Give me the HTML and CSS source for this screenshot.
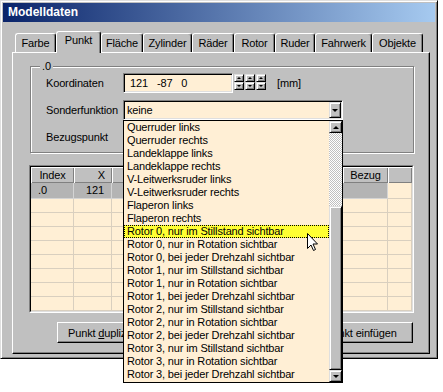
FILE: index.html
```html
<!DOCTYPE html>
<html lang="de">
<head>
  <title>Modelldaten</title>
  <meta charset="UTF-8" />
<link rel="stylesheet" href="styles.css">
</head>
<body>
<div class="window">
  <div class="titlebar">Modelldaten</div>
  <div class="client">
    <div class="tabs">
      <div class="tab">Farbe</div>
      <div class="tab active">Punkt</div>
      <div class="tab">Fläche</div>
      <div class="tab">Zylinder</div>
      <div class="tab">Räder</div>
      <div class="tab">Rotor</div>
      <div class="tab">Ruder</div>
      <div class="tab">Fahrwerk</div>
      <div class="tab">Objekte</div>
    </div>
    <div class="panel">
      <fieldset class="group">
        <legend>.0</legend>
        <div class="row">
          <label>Koordinaten</label>
          <div class="edit coords"><span>121</span><span>-87</span><span>0</span></div>
          <div class="spins">
            <div class="spin"><span class="sbtn up"></span><span class="sbtn down"></span></div>
            <div class="spin"><span class="sbtn up"></span><span class="sbtn down"></span></div>
            <div class="spin"><span class="sbtn up"></span><span class="sbtn down"></span></div>
          </div>
          <span class="unit">[mm]</span>
        </div>
        <div class="row">
          <label>Sonderfunktion</label>
          <div class="edit combo">
            <span class="combo-text">keine</span>
            <span class="drop-btn"></span>
            <div class="droplist">
              <ul class="items">
                <li>Querruder links</li>
                <li>Querruder rechts</li>
                <li>Landeklappe links</li>
                <li>Landeklappe rechts</li>
                <li>V-Leitwerksruder links</li>
                <li>V-Leitwerksruder rechts</li>
                <li>Flaperon links</li>
                <li>Flaperon rechts</li>
                <li class="sel">Rotor 0, nur im Stillstand sichtbar</li>
                <li>Rotor 0, nur in Rotation sichtbar</li>
                <li>Rotor 0, bei jeder Drehzahl sichtbar</li>
                <li>Rotor 1, nur im Stillstand sichtbar</li>
                <li>Rotor 1, nur in Rotation sichtbar</li>
                <li>Rotor 1, bei jeder Drehzahl sichtbar</li>
                <li>Rotor 2, nur im Stillstand sichtbar</li>
                <li>Rotor 2, nur in Rotation sichtbar</li>
                <li>Rotor 2, bei jeder Drehzahl sichtbar</li>
                <li>Rotor 3, nur im Stillstand sichtbar</li>
                <li>Rotor 3, nur in Rotation sichtbar</li>
                <li>Rotor 3, bei jeder Drehzahl sichtbar</li>
              </ul>
              <div class="vscroll">
                <span class="sb-btn up"></span>
                <span class="sb-track"></span>
                <span class="sb-thumb"></span>
                <span class="sb-btn down"></span>
              </div>
            </div>
          </div>
        </div>
        <div class="row">
          <label>Bezugspunkt</label>
          <div class="edit combo">
            <span class="combo-text"></span>
            <span class="drop-btn"></span>
          </div>
        </div>
      </fieldset>

      <div class="grid">
        <div class="grid-inner">
          <div class="grow head">
            <div class="c center">Index</div>
            <div class="c right">X</div>
            <div class="c"></div>
            <div class="c"></div>
            <div class="c"></div>
            <div class="c center">Bezug</div>
            <div class="c"></div>
          </div>
          <div class="grow first current">
            <div class="c">.0</div>
            <div class="c right">121</div>
            <div class="c"></div>
            <div class="c"></div>
            <div class="c"></div>
            <div class="c"></div>
            <div class="c"></div>
          </div>
          <div class="grow"><div class="c"></div><div class="c"></div><div class="c"></div><div class="c"></div><div class="c"></div><div class="c"></div><div class="c"></div></div>
          <div class="grow"><div class="c"></div><div class="c"></div><div class="c"></div><div class="c"></div><div class="c"></div><div class="c"></div><div class="c"></div></div>
          <div class="grow"><div class="c"></div><div class="c"></div><div class="c"></div><div class="c"></div><div class="c"></div><div class="c"></div><div class="c"></div></div>
          <div class="grow"><div class="c"></div><div class="c"></div><div class="c"></div><div class="c"></div><div class="c"></div><div class="c"></div><div class="c"></div></div>
          <div class="grow"><div class="c"></div><div class="c"></div><div class="c"></div><div class="c"></div><div class="c"></div><div class="c"></div><div class="c"></div></div>
          <div class="grow"><div class="c"></div><div class="c"></div><div class="c"></div><div class="c"></div><div class="c"></div><div class="c"></div><div class="c"></div></div>
          <div class="grow"><div class="c"></div><div class="c"></div><div class="c"></div><div class="c"></div><div class="c"></div><div class="c"></div><div class="c"></div></div>
          <div class="grow"><div class="c"></div><div class="c"></div><div class="c"></div><div class="c"></div><div class="c"></div><div class="c"></div><div class="c"></div></div>
          <div class="grow"><div class="c"></div><div class="c"></div><div class="c"></div><div class="c"></div><div class="c"></div><div class="c"></div><div class="c"></div></div>
        </div>
      </div>

      <div class="buttons">
        <button type="button" class="btn">Punkt <u>d</u>uplizieren</button>
        <button type="button" class="btn">Punkt einfügen</button>
      </div>
    </div>
  </div>
</div>

<svg class="cursor" width="12" height="19" viewBox="0 0 12 19">
  <path d="M0.5 0.5 L0.5 15.5 L4 12 L6.5 17.5 L8.5 16.5 L6 11 L10.5 11 Z" fill="#fff" stroke="#000" stroke-width="1" stroke-linejoin="miter"/>
</svg>
</body>
</html>
```

FILE: styles.css
```css
body {
  margin: 0;
  min-height: 392px;
  background-color: #fff;
  font-family: "Liberation Sans", Arial, sans-serif;
  font-size: 11px;
  letter-spacing: -0.15px;
  color: #000;
}

/* window frame */
.window {
  width: 438px;
  height: 359px;
  box-sizing: border-box;
  padding: 2px;
  background-color: #c0c0c0;
  border: 1px solid;
  border-color: #dfdfdf #000 #000 #dfdfdf;
  box-shadow: inset 1px 1px #fff, inset -1px -1px #808080;
}

.titlebar {
  height: 19px;
  line-height: 19px;
  padding-left: 5px;
  background: linear-gradient(to right, #0a246a, #a6caf0);
  color: #fff;
  font-weight: bold;
  font-size: 12px;
  letter-spacing: 0;
}

.client {
  padding: 9px 0 0 9px;
}

/* tabs */
.tabs {
  position: relative;
  z-index: 1;
  display: flex;
  align-items: flex-end;
  height: 21px;
  padding-left: 3px;
}

.tab {
  height: 19px;
  box-sizing: border-box;
  border: 1px solid #fff;
  border-bottom: none;
  border-right-color: #000;
  border-radius: 3px 3px 0 0;
  box-shadow: inset -1px 0 #808080;
  text-align: center;
  line-height: 18px;
}

.tab.active {
  height: 22px;
  margin-bottom: -1px;
  background-color: #c0c0c0;
  line-height: 17px;
}

.tab:nth-child(1) { width: 41px; }
.tab:nth-child(2) { width: 45px; }
.tab:nth-child(3) { width: 42px; }
.tab:nth-child(4) { width: 49px; }
.tab:nth-child(5) { width: 42px; }
.tab:nth-child(6) { width: 41px; }
.tab:nth-child(7) { width: 40px; }
.tab:nth-child(8) { width: 57px; }
.tab:nth-child(9) { width: 51px; }

.panel {
  width: 418px;
  height: 302px;
  box-sizing: border-box;
  border: 1px solid;
  border-color: #fff #000 #000 #fff;
  box-shadow: inset -1px -1px #808080;
}

/* group box */
.group {
  display: flex;
  flex-direction: column;
  gap: 7px;
  min-width: 0;
  width: 384px;
  box-sizing: border-box;
  margin: 7px 0 0 17px;
  padding: 0 0 5px 0;
  border: 1px solid #808080;
  box-shadow: 1px 1px #fff, inset 1px 1px #fff;
}

.group legend {
  margin-left: 9px;
  padding: 0 2px;
  line-height: 13px;
  background-color: #c0c0c0;
}

.row {
  display: flex;
  align-items: center;
  height: 20px;
  padding-left: 15px;
}

.row label {
  width: 77px;
}

.edit {
  height: 20px;
  box-sizing: border-box;
  border: 1px solid;
  border-color: #808080 #fff #fff #808080;
  box-shadow: inset 1px 1px #000, inset -1px -1px #dfdfdf;
  background-color: #ffefd5;
}

.coords {
  display: flex;
  align-items: center;
  gap: 9px;
  width: 110px;
  padding-left: 6px;
}

.spins {
  display: flex;
  gap: 1px;
  margin: -2px 0 0 1px;
}

.spin {
  display: flex;
  flex-direction: column;
}

.sbtn,
.sb-btn,
.drop-btn {
  display: flex;
  align-items: center;
  justify-content: center;
  box-sizing: border-box;
  background-color: #c0c0c0;
  border: 1px solid;
  border-color: #dfdfdf #000 #000 #dfdfdf;
  box-shadow: inset 1px 1px #fff, inset -1px -1px #808080;
}

.sbtn {
  width: 10px;
  height: 8px;
}

.sbtn.up::after,
.sb-btn.up::after {
  content: "";
  border-left: 2px solid transparent;
  border-right: 2px solid transparent;
  border-bottom: 2px solid #000;
}

.sbtn.down::after,
.sb-btn.down::after,
.drop-btn::after {
  content: "";
  border-left: 2px solid transparent;
  border-right: 2px solid transparent;
  border-top: 2px solid #000;
}

.unit {
  margin-left: 11px;
}

/* combo box */
.combo {
  position: relative;
  display: flex;
  align-items: center;
  width: 220px;
  padding-left: 3px;
}

.combo-text {
  flex: 1;
}

.drop-btn {
  width: 12px;
  height: 16px;
  margin-right: 1px;
}

.drop-btn::after {
  border-left-width: 3px;
  border-right-width: 3px;
  border-top-width: 3px;
}

.droplist {
  position: absolute;
  z-index: 10;
  top: 19px;
  left: -1px;
  display: flex;
  width: 220px;
  height: 263px;
  box-sizing: border-box;
  border: 1px solid #000;
  background-color: #ffefd5;
}

.items {
  flex: 1;
  margin: 0;
  padding: 0;
  list-style: none;
}

.items li {
  height: 13px;
  line-height: 13px;
  padding-left: 3px;
  white-space: nowrap;
  overflow: hidden;
}

.items li.sel {
  background-color: #ffff33;
  outline: 1px dotted #000;
  outline-offset: -1px;
}

.vscroll {
  display: flex;
  flex-direction: column;
  width: 13px;
}

.sb-btn {
  height: 12px;
}

.sb-btn.up::after,
.sb-btn.down::after {
  border-left-width: 3px;
  border-right-width: 3px;
  border-top-width: 3px;
  border-bottom-width: 3px;
}

.sb-btn.up::after { border-top: none; }
.sb-btn.down::after { border-bottom: none; }

.sb-track {
  height: 73px;
  background: repeating-conic-gradient(#fff 0 25%, #c0c0c0 0 50%) 0 0 / 2px 2px;
}

.sb-thumb {
  flex: 1;
  box-sizing: border-box;
  background-color: #c0c0c0;
  border: 1px solid;
  border-color: #dfdfdf #000 #000 #dfdfdf;
  box-shadow: inset 1px 1px #fff, inset -1px -1px #808080;
}

/* point grid */
.grid {
  width: 385px;
  height: 148px;
  box-sizing: border-box;
  margin: 12px 0 0 16px;
  border: 1px solid;
  border-color: #808080 #fff #fff #808080;
}

.grid-inner {
  height: 100%;
  box-sizing: border-box;
  border: 1px solid;
  border-color: #000 #dfdfdf #dfdfdf #000;
  background-color: #ffefd5;
  overflow: hidden;
}

.grow {
  display: grid;
  grid-template-columns: 43px 38px 40px 40px 151px 45px 1fr;
  height: 14px;
}

.grow .c {
  box-sizing: border-box;
  padding: 0 4px;
  line-height: 13px;
  border-right: 1px solid #d9cfbf;
  border-bottom: 1px solid #d9cfbf;
  white-space: nowrap;
  overflow: hidden;
}

.grow.head {
  height: 16px;
}

.grow.head .c {
  line-height: 16px;
  background-color: #c0c0c0;
  border: none;
  box-shadow: inset 1px 1px #fff, inset -1px -1px #808080;
}

.grow.first {
  height: 16px;
}

.grow.first .c {
  line-height: 15px;
  padding-left: 7px;
}

.grow.current .c {
  background-color: #b4b4b4;
  border-color: #d4d4d4;
}

.grow.current .c:last-child {
  background-color: #ffefd5;
  border-color: #d9cfbf;
}

.grow .c.center {
  text-align: center;
}

.grow .c.right {
  text-align: right;
  padding-right: 7px;
}

/* buttons */
.buttons {
  display: flex;
  justify-content: space-between;
  width: 356px;
  margin: 9px 0 0 44px;
}

.btn {
  width: 104px;
  height: 21px;
  box-sizing: border-box;
  padding: 0;
  border: 1px solid;
  border-color: #fff #000 #000 #fff;
  box-shadow: inset -1px -1px #808080;
  background-color: #c0c0c0;
  font: inherit;
  letter-spacing: inherit;
  color: #000;
}

.cursor {
  position: absolute;
  top: 233px;
  left: 307px;
  z-index: 20;
}
```
